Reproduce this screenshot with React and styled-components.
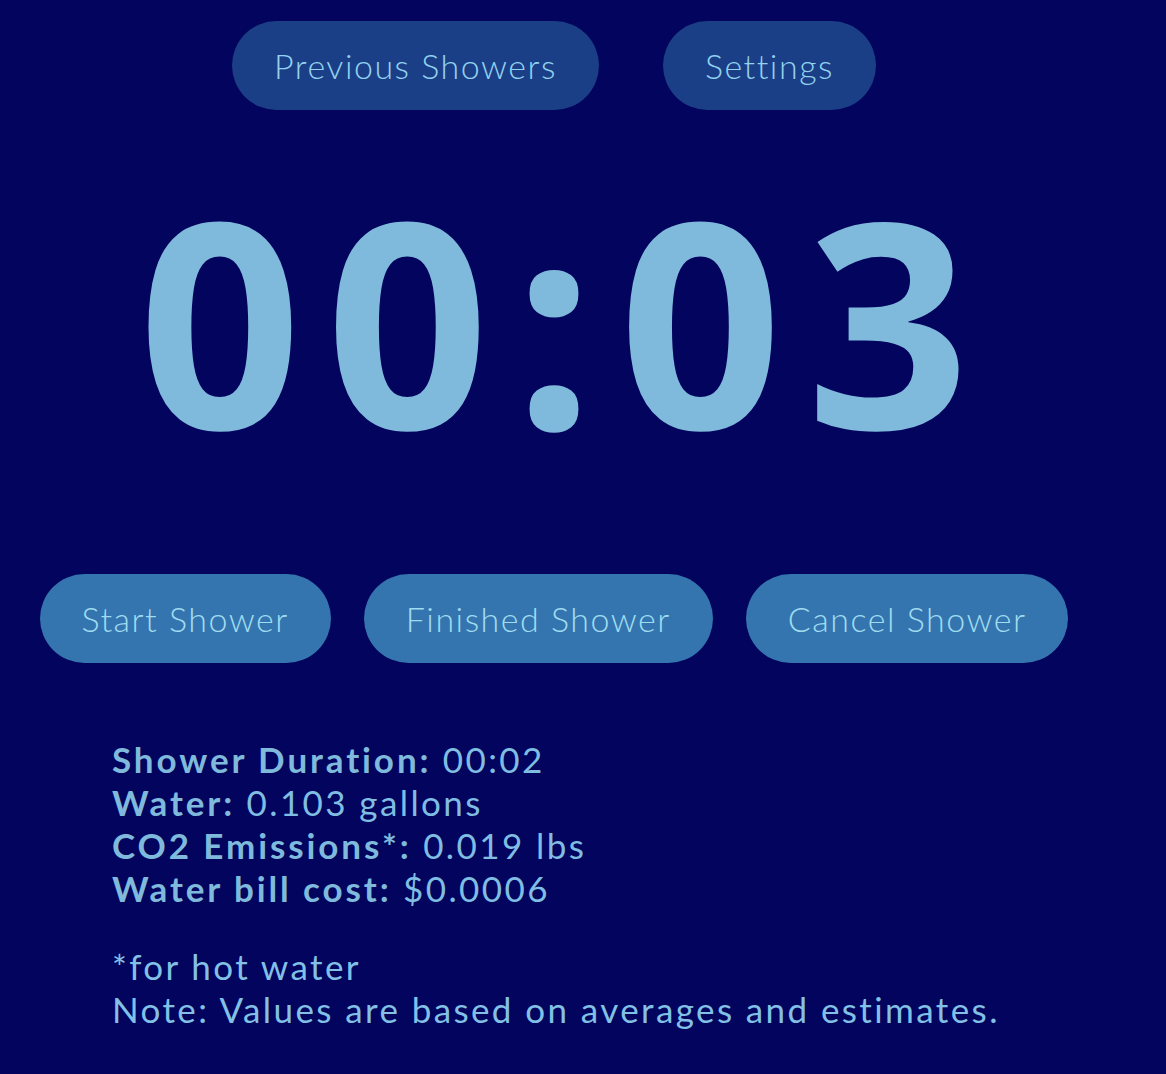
import styled, { createGlobalStyle } from "styled-components";

const GlobalStyle = createGlobalStyle`
  html, body {
    margin: 0;
    padding: 0;
    background-color: #03045e;
  }
  body {
    font-family: Lato, "Open Sans", sans-serif;
    color: #7fbde2;
  }
`;

const App = () => {
  return (
    <>
      <GlobalStyle />
      <Page>
        <NavRow>
          <NavButton>Previous Showers</NavButton>
          <NavButton>Settings</NavButton>
        </NavRow>

        <Timer>00:03</Timer>

        <ControlRow>
          <ControlButton>Start Shower</ControlButton>
          <ControlButton>Finished Shower</ControlButton>
          <ControlButton>Cancel Shower</ControlButton>
        </ControlRow>

        <Stats>
          <StatLine>
            <StatLabel>Shower Duration:</StatLabel> 00:02
          </StatLine>
          <StatLine>
            <StatLabel>Water:</StatLabel> 0.103 gallons
          </StatLine>
          <StatLine>
            <StatLabel>CO2 Emissions*:</StatLabel> 0.019 lbs
          </StatLine>
          <StatLine>
            <StatLabel>Water bill cost:</StatLabel> $0.0006
          </StatLine>
        </Stats>

        <Notes>
          <NoteLine>*for hot water</NoteLine>
          <NoteLine>Note: Values are based on averages and estimates.</NoteLine>
        </Notes>
      </Page>
    </>
  );
};

export default App;

//Styled Components
const Page = styled.main`
  width: 1108px;
  display: flex;
  flex-direction: column;
  align-items: center;
  padding-top: 21px;
  padding-bottom: 40px;
`;

const NavRow = styled.nav`
  display: flex;
  justify-content: center;
  gap: 64px;
`;

const PillButton = styled.button`
  height: 89px;
  padding: 0 42px;
  border: none;
  border-radius: 45px;
  font-family: Lato, "Open Sans", sans-serif;
  font-size: 34px;
  font-weight: 300;
  letter-spacing: 1.5px;
  cursor: pointer;
`;

const NavButton = styled(PillButton)`
  background-color: #1b3f87;
  color: #92d2ee;
`;

const Timer = styled.h1`
  margin: 65px 0 0;
  padding-left: 24px;
  font-family: "Open Sans", sans-serif;
  font-size: 286px;
  line-height: 1;
  font-weight: 700;
  color: #7fb9db;
  letter-spacing: 24px;
`;

const ControlRow = styled.div`
  display: flex;
  justify-content: center;
  gap: 33px;
  margin-top: 113px;
`;

const ControlButton = styled(PillButton)`
  background-color: #3475af;
  color: #a0dcf0;
`;

const Stats = styled.section`
  align-self: flex-start;
  margin-left: 112px;
  margin-top: 75px;
  font-size: 35px;
  font-weight: 400;
  line-height: 43px;
  letter-spacing: 2.4px;
`;

const StatLine = styled.div``;

const StatLabel = styled.strong`
  font-weight: 700;
  letter-spacing: 2.9px;
  color: #7fb9db;
`;

const Notes = styled.section`
  align-self: flex-start;
  margin-left: 112px;
  margin-top: 35px;
  font-size: 35px;
  font-weight: 400;
  line-height: 43px;
  letter-spacing: 2.4px;
  color: #82c0e6;
`;

const NoteLine = styled.div``;
